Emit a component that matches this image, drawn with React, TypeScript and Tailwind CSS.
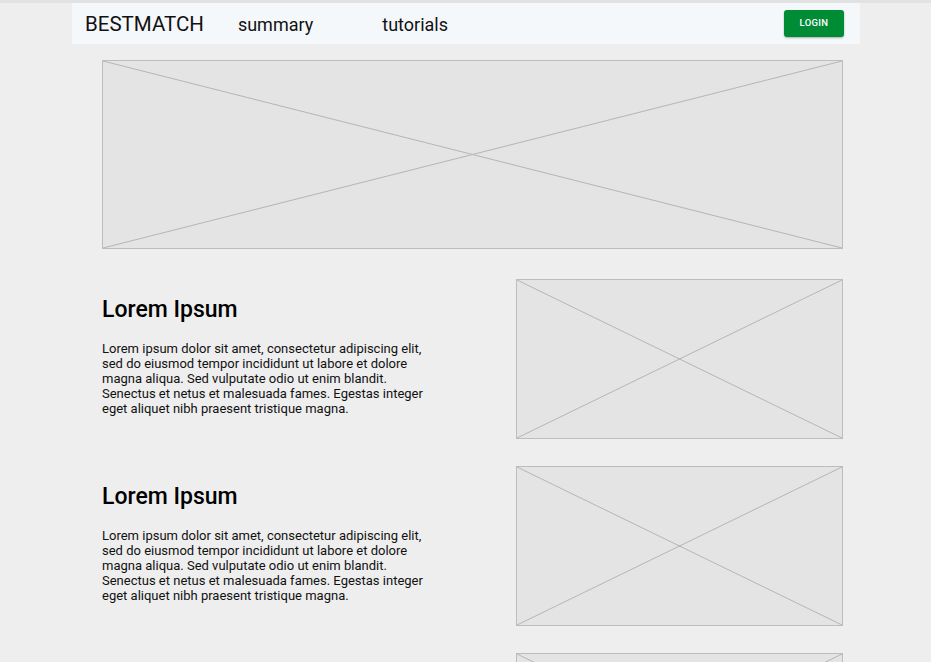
import React from "react";

function Placeholder({ className }: { className: string }) {
  return (
    <div className={`border border-[#bdbdbd] bg-[#e4e4e4] ${className}`}>
      <svg className="block w-full h-full" viewBox="0 0 100 100" preserveAspectRatio="none">
        <line x1="0" y1="0" x2="100" y2="100" stroke="#b5b5b5" strokeWidth="1" vectorEffect="non-scaling-stroke" />
        <line x1="100" y1="0" x2="0" y2="100" stroke="#b5b5b5" strokeWidth="1" vectorEffect="non-scaling-stroke" />
      </svg>
    </div>
  );
}

const body =
  "Lorem ipsum dolor sit amet, consectetur adipiscing elit, sed do eiusmod tempor incididunt ut labore et dolore magna aliqua. Sed vulputate odio ut enim blandit. Senectus et netus et malesuada fames. Egestas integer eget aliquet nibh praesent tristique magna.";

function Section() {
  return (
    <div className="flex justify-between">
      <div className="w-[330px] pt-[17px]">
        <h2 className="text-[23px] leading-[28px] font-medium text-black">Lorem Ipsum</h2>
        <p className="mt-[17px] text-[13px] leading-[15px] text-[#111]">{body}</p>
      </div>
      <Placeholder className="w-[327px] h-[160px]" />
    </div>
  );
}

export default function App() {
  return (
    <div
      className="min-h-[662px] bg-[#eeeeee] border-t-[3px] border-[#e2e2e2] overflow-hidden"
      style={{ fontFamily: "Roboto, 'Liberation Sans', sans-serif" }}
    >
      <header className="mx-[72px] w-[788px] h-[41px] bg-[#f5f8fb] flex items-center pl-[13px] pr-[16px]">
        <span className="mt-[2px] text-[20.5px] text-[#111]">BESTMATCH</span>
        <span className="mt-[2px] ml-[34px] text-[18px] text-[#111]">summary</span>
        <span className="mt-[2px] ml-[69px] text-[18px] text-[#111]">tutorials</span>
        <button className="ml-auto mt-[0px] w-[60px] h-[27px] rounded-[3px] bg-[#008c35] text-white text-[9.5px] font-medium tracking-[0.3px] shadow-[0_1px_2px_rgba(0,0,0,0.3)]">
          LOGIN
        </button>
      </header>
      <div className="ml-[102px] w-[741px] mt-[16px] flex flex-col">
        <Placeholder className="w-[741px] h-[189px]" />
        <div className="mt-[30px] flex flex-col gap-[27px]">
          <Section />
          <Section />
          <div className="flex justify-end">
            <Placeholder className="w-[327px] h-[160px]" />
          </div>
        </div>
      </div>
    </div>
  );
}
